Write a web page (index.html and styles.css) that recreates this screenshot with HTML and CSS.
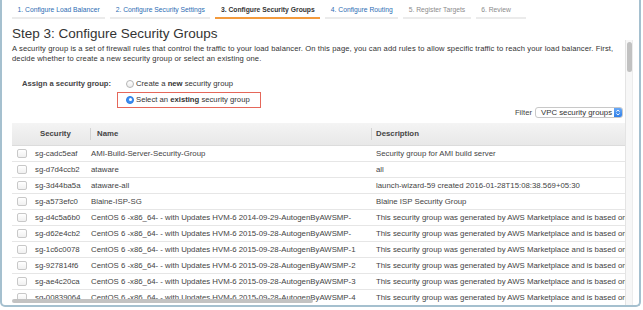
FILE: index.html
```html
<!DOCTYPE html>
<html>
<head>
<meta charset="utf-8">
<link rel="stylesheet" href="styles.css">
</head>
<body>
<div class="frame">
  <div class="main">
    <nav class="tabs">
      <span class="tab">1. Configure Load Balancer</span>
      <span class="tab">2. Configure Security Settings</span>
      <span class="tab active">3. Configure Security Groups</span>
      <span class="tab">4. Configure Routing</span>
      <span class="tab disabled">5. Register Targets</span>
      <span class="tab disabled">6. Review</span>
    </nav>
    <h1>Step 3: Configure Security Groups</h1>
    <p class="intro">A security group is a set of firewall rules that control the traffic to your load balancer. On this page, you can add rules to allow specific traffic to reach your load balancer. First, decide whether to create a new security group or select an existing one.</p>
    <div class="assign">
      <span class="assign-label">Assign a security group:</span>
      <div class="options">
        <label class="opt"><span class="radio"></span><span>Create a <b>new</b> security group</span></label>
        <label class="opt selected"><span class="radio on"></span><span>Select an <b>existing</b> security group</span></label>
      </div>
    </div>
    <div class="filter-row">
      <span>Filter</span>
      <div class="select">
        <span class="select-text">VPC security groups</span>
        <span class="spin"><svg width="8" height="9" viewBox="0 0 8 9"><path d="M2.3 3.6 L4 2 L5.7 3.6 M2.3 5.4 L4 7 L5.7 5.4" fill="none" stroke="#fff" stroke-width="0.9"/></svg></span>
      </div>
    </div>
    <div class="table-wrap">
      <table class="grid">
        <colgroup><col class="c1"><col class="c2"><col class="c3"><col class="c4"></colgroup>
        <thead>
          <tr><th></th><th class="th-sec">Security</th><th class="th-name sep">Name</th><th class="th-desc sep">Description</th></tr>
        </thead>
        <tbody>
          <tr><td><span class="cb"></span></td><td class="sec">sg-cadc5eaf</td><td class="name">AMI-Build-Server-Security-Group</td><td class="desc">Security group for AMI build server</td></tr>
          <tr><td><span class="cb"></span></td><td class="sec">sg-d7d4ccb2</td><td class="name">ataware</td><td class="desc">all</td></tr>
          <tr><td><span class="cb"></span></td><td class="sec">sg-3d44ba5a</td><td class="name">ataware-all</td><td class="desc">launch-wizard-59 created 2016-01-28T15:08:38.569+05:30</td></tr>
          <tr><td><span class="cb"></span></td><td class="sec">sg-a573efc0</td><td class="name">Blaine-ISP-SG</td><td class="desc">Blaine ISP Security Group</td></tr>
          <tr><td><span class="cb"></span></td><td class="sec">sg-d4c5a6b0</td><td class="name">CentOS 6 -x86_64- - with Updates HVM-6 2014-09-29-AutogenByAWSMP-</td><td class="desc">This security group was generated by AWS Marketplace and is based on</td></tr>
          <tr><td><span class="cb"></span></td><td class="sec">sg-d62e4cb2</td><td class="name">CentOS 6 -x86_64- - with Updates HVM-6 2015-09-28-AutogenByAWSMP-</td><td class="desc">This security group was generated by AWS Marketplace and is based on</td></tr>
          <tr><td><span class="cb"></span></td><td class="sec">sg-1c6c0078</td><td class="name">CentOS 6 -x86_64- - with Updates HVM-6 2015-09-28-AutogenByAWSMP-1</td><td class="desc">This security group was generated by AWS Marketplace and is based on</td></tr>
          <tr><td><span class="cb"></span></td><td class="sec">sg-927814f6</td><td class="name">CentOS 6 -x86_64- - with Updates HVM-6 2015-09-28-AutogenByAWSMP-2</td><td class="desc">This security group was generated by AWS Marketplace and is based on</td></tr>
          <tr><td><span class="cb"></span></td><td class="sec">sg-ae4c20ca</td><td class="name">CentOS 6 -x86_64- - with Updates HVM-6 2015-09-28-AutogenByAWSMP-3</td><td class="desc">This security group was generated by AWS Marketplace and is based on</td></tr>
          <tr><td><span class="cb"></span></td><td class="sec">sg-00839064</td><td class="name">CentOS 6 -x86_64- - with Updates HVM-6 2015-09-28-AutogenByAWSMP-4</td><td class="desc">This security group was generated by AWS Marketplace and is based on</td></tr>
        </tbody>
      </table>
      <div class="hscroll"><div class="hthumb"></div></div>
    </div>
  </div>
  <div class="vscroll"><div class="vthumb"></div></div>
</div>
</body>
</html>
```
FILE: styles.css
```css
* { box-sizing: border-box; }
html, body { margin: 0; background: #fff; }
body { font-family: "Liberation Sans", Arial, Helvetica, sans-serif; color: #333; }

.frame {
  width: 641px;
  height: 307px;
  border: 2px solid #a5c0cf;
  border-top: none;
  border-radius: 0 0 5px 5px;
  display: flex;
  overflow: hidden;
  background: #fff;
}
.main {
  flex: 1;
  min-width: 0;
  padding-left: 10px;
  display: flex;
  flex-direction: column;
}
.vscroll {
  width: 8px;
  margin-top: 40px;
  margin-right: 6px;
  background: #f7f7f7;
  border-left: 1px solid #e4e4e4;
  border-right: 1px solid #ececec;
  padding: 2px 0 0 1px;
}
.vthumb { width: 5px; height: 30px; border-radius: 3px; background: #c1c1c1; }

.tabs { display: flex; gap: 5px; height: 19px; flex-shrink: 0; }
.tab {
  font-size: 6.75px;
  line-height: 10px;
  padding: 5px 5.5px 2px;
  border-bottom: 2px solid #ebebeb;
  min-width: 50px;
  color: #2e6db4;
  white-space: nowrap;
}
.tab.active { color: #333; font-weight: bold; border-bottom-color: #f39a3c; }
.tab.disabled { color: #8c8c8c; }

h1 { font-size: 13.5px; line-height: 16px; font-weight: normal; margin: 7px 0 0; color: #333; flex-shrink: 0; }
.intro { font-size: 7.6px; letter-spacing: 0.11px; line-height: 10px; margin: 2px 0 0; color: #333; padding-right: 4px; flex-shrink: 0; }

.assign { display: flex; margin-top: 11.6px; padding-left: 10px; flex-shrink: 0; }
.assign-label { width: 95px; font-weight: bold; font-size: 7.6px; line-height: 16px; color: #444; }
.options { display: flex; flex-direction: column; }
.opt {
  display: flex;
  align-items: center;
  gap: 2px;
  height: 16px;
  width: 144px;
  padding-left: 8px;
  font-size: 7.7px;
  color: #333;
  border: 1px solid transparent;
}
.opt.selected { border-color: #e5675a; }
.radio {
  width: 8px;
  height: 8px;
  border-radius: 50%;
  border: 1px solid #b4b4b4;
  background: linear-gradient(#fff, #ececec);
  flex-shrink: 0;
  display: flex;
  align-items: center;
  justify-content: center;
}
.radio.on { background: #3a8ef5; border-color: #2f7de0; }
.radio.on::after { content: ""; width: 3px; height: 3px; border-radius: 50%; background: #fff; }

.filter-row {
  display: flex;
  justify-content: flex-end;
  align-items: center;
  gap: 3px;
  margin-top: -2px;
  height: 13px;
  padding-right: 2px;
  font-size: 7.7px;
  color: #444;
  flex-shrink: 0;
}
.select {
  width: 88px;
  height: 11px;
  display: flex;
  align-items: center;
  border: 1px solid #c8c8c8;
  border-radius: 3px;
  background: #fff;
  overflow: hidden;
}
.select-text { flex: 1; padding-left: 5px; font-size: 7.8px; color: #333; white-space: nowrap; }
.spin {
  width: 8px;
  height: 100%;
  background: linear-gradient(#69a9f7, #2f7fe8);
  display: flex;
  align-items: center;
  justify-content: center;
}

.table-wrap { flex: 1; margin-top: 4px; overflow: hidden; position: relative; }
.grid { border-collapse: separate; border-spacing: 0; table-layout: fixed; width: 900px; }
.c1 { width: 20px; }
.c2 { width: 57px; }
.c3 { width: 281px; }
.c4 { width: 542px; }
.grid th {
  height: 23px;
  padding: 0;
  background: linear-gradient(#f4f4f4, #e8e8e8);
  border-bottom: 1px solid #dcdcdc;
  font-size: 7.8px;
  font-weight: bold;
  color: #444;
  text-align: left;
  position: relative;
  white-space: nowrap;
}
.grid th.th-sec { padding-left: 8px; }
.grid th.th-name { padding-left: 8px; }
.grid th.th-desc { padding-left: 6px; }
.grid th.sep::before {
  content: "";
  position: absolute;
  left: 1px;
  top: 5px;
  bottom: 5px;
  width: 1px;
  background: #d2d2d2;
}
.grid td {
  height: 16px;
  padding: 0;
  border-bottom: 1px solid #e6e6e6;
  font-size: 7.8px;
  color: #444;
  white-space: nowrap;
  overflow: hidden;
  vertical-align: middle;
}
.grid td.sec { padding-left: 3px; }
.grid td.name { padding-left: 2px; }
.grid td.desc { padding-left: 6px; }
.cb {
  display: block;
  width: 10px;
  height: 9px;
  margin-left: 5px;
  border: 1px solid #c8c8c8;
  border-radius: 2px;
  background: linear-gradient(#fff, #f0f0f0);
}

.hscroll { position: absolute; left: 0; right: 0; bottom: 2px; height: 4px; }
.hthumb { width: 301px; height: 4px; border-radius: 2px; background: #c2c2c2; }
```
